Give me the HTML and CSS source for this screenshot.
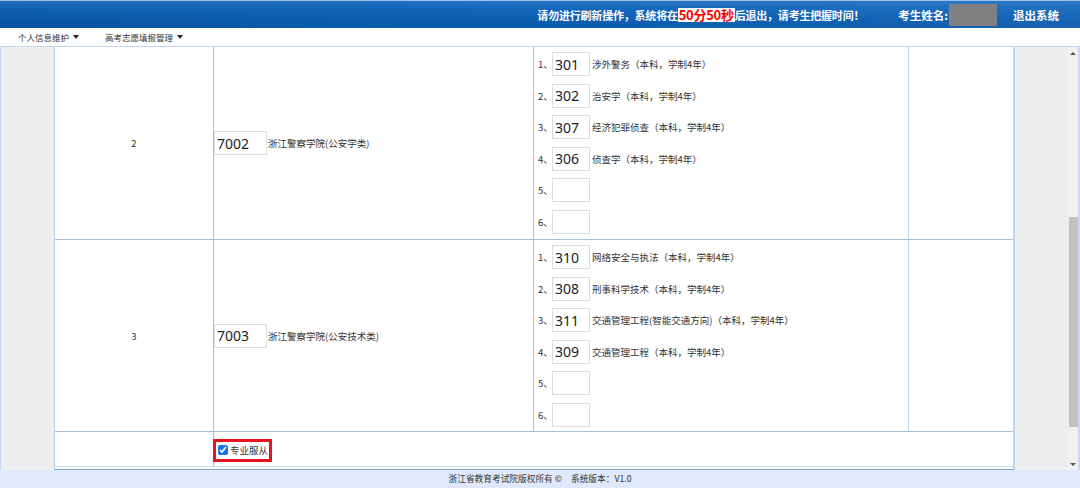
FILE: index.html
```html
<!DOCTYPE html>
<html lang="zh-CN">
<head>
<meta charset="utf-8">
<title>高考志愿填报</title>
<link rel="stylesheet" href="styles.css">
</head>
<body>
<div class="header">
  <div class="notice">请勿进行刷新操作，系统将在<span class="timer">50分50秒</span>后退出，请考生把握时间！</div>
  <div class="student">考生姓名:<span class="name-mask"></span></div>
  <a class="logout">退出系统</a>
</div>
<div class="menu">
  <span class="menu-item">个人信息维护<i class="caret"></i></span>
  <span class="menu-item">高考志愿填报管理<i class="caret"></i></span>
</div>
<div class="main">
  <div class="side-left"></div>
  <div class="content">
    <div class="row row-tall">
      <div class="cell c-no">2</div>
      <div class="cell c-school"><input class="code-lg" value="7002"><span class="sname">浙江警察学院(公安学类)</span></div>
      <div class="cell c-major">
        <div class="pick"><span class="idx">1、</span><input class="code-sm" value="301"><span class="pname">涉外警务（本科，学制4年）</span></div>
        <div class="pick"><span class="idx">2、</span><input class="code-sm" value="302"><span class="pname">治安学（本科，学制4年）</span></div>
        <div class="pick"><span class="idx">3、</span><input class="code-sm" value="307"><span class="pname">经济犯罪侦查（本科，学制4年）</span></div>
        <div class="pick"><span class="idx">4、</span><input class="code-sm" value="306"><span class="pname">侦查学（本科，学制4年）</span></div>
        <div class="pick"><span class="idx">5、</span><input class="code-sm" value=""></div>
        <div class="pick"><span class="idx">6、</span><input class="code-sm" value=""></div>
      </div>
      <div class="cell c-extra"></div>
    </div>
    <div class="row row-tall row-second">
      <div class="cell c-no">3</div>
      <div class="cell c-school"><input class="code-lg" value="7003"><span class="sname">浙江警察学院(公安技术类)</span></div>
      <div class="cell c-major">
        <div class="pick"><span class="idx">1、</span><input class="code-sm" value="310"><span class="pname">网络安全与执法（本科，学制4年）</span></div>
        <div class="pick"><span class="idx">2、</span><input class="code-sm" value="308"><span class="pname">刑事科学技术（本科，学制4年）</span></div>
        <div class="pick"><span class="idx">3、</span><input class="code-sm" value="311"><span class="pname">交通管理工程(智能交通方向)（本科，学制4年）</span></div>
        <div class="pick"><span class="idx">4、</span><input class="code-sm" value="309"><span class="pname">交通管理工程（本科，学制4年）</span></div>
        <div class="pick"><span class="idx">5、</span><input class="code-sm" value=""></div>
        <div class="pick"><span class="idx">6、</span><input class="code-sm" value=""></div>
      </div>
      <div class="cell c-extra"></div>
    </div>
    <div class="row row-short">
      <div class="cell c-no"></div>
      <div class="cell c-obey"><label class="obey"><input type="checkbox" checked>专业服从</label></div>
    </div>
    <div class="content-gap"></div>
  </div>
  <div class="side-right">
    <div class="scrollbar">
      <div class="sb-arrow"><i class="tri-up"></i></div>
      <div class="sb-pre"></div>
      <div class="sb-thumb"></div>
      <div class="sb-post"></div>
      <div class="sb-arrow"><i class="tri-down"></i></div>
    </div>
  </div>
</div>
<div class="footer">浙江省教育考试院版权所有 ©<span class="sep"></span>系统版本：V1.0</div>
</body>
</html>
```

FILE: styles.css
```css
* { box-sizing: border-box; }
html, body { margin: 0; padding: 0; }
body {
  width: 1080px;
  height: 488px;
  overflow: hidden;
  font-family: "Noto Sans CJK SC", "Noto Sans", sans-serif;
  color: #333;
  background: #fff;
}

/* header */
.header {
  height: 28px;
  display: flex;
  align-items: center;
  justify-content: flex-end;
  padding-right: 21px;
  border-top: 1px solid #9fc0e6;
  background:
    linear-gradient(100deg, rgba(0,0,0,0.06) 0%, rgba(0,0,0,0) 40%, rgba(255,255,255,0.05) 100%),
    linear-gradient(to bottom, #2373c5 0%, #1265ba 30%, #0b5cb0 70%, #0a5aad 100%);
  color: #fff;
  font-weight: bold;
  font-size: 11.5px;
}
.notice { font-size: 11px; letter-spacing: -0.2px; white-space: nowrap; }
.timer {
  background: #fff;
  color: #f00;
  font-size: 13px;
  letter-spacing: -0.3px;
  padding: 0 1px;
  line-height: 14px;
  display: inline-block;
}
.student { margin-left: 34px; display: flex; align-items: center; }
.name-mask {
  display: inline-block;
  width: 48px;
  height: 22px;
  background: #808080;
  margin-left: 1px;
}
.logout { margin-left: 16px; color: #fff; }

/* menu */
.menu {
  height: 19px;
  display: flex;
  align-items: center;
  padding-left: 18px;
  border-bottom: 1px solid #c3d6ee;
  font-size: 8.5px;
  color: #333;
}
.menu-item { display: flex; align-items: center; margin-right: 26px; }
.caret {
  display: inline-block;
  width: 0; height: 0;
  border-left: 3px solid transparent;
  border-right: 3px solid transparent;
  border-top: 4px solid #222;
  margin-left: 4px;
}

/* main */
.main {
  height: 423px;
  display: flex;
  border-left: 1px solid #c3d6ee;
}
.side-left { width: 53px; background: #eeeeee; }
.content {
  width: 961px;
  background: #fff;
  border-left: 1px solid #b6cde9;
  border-right: 2px solid #c0d4ec;
  border-bottom: 1px solid #76a5dc;
  display: flex;
  flex-direction: column;
}
.row {
  display: grid;
  grid-template-columns: 159px 320px 374px 1fr;
  border-bottom: 1px solid #a9c0da;
}
.row-tall { height: 193px; }
.row-second { height: 192px; }
.row-short { height: 35px; grid-template-columns: 159px 1fr; border-bottom-color: #c8d7ea; }
.content-gap { height: 2px; }
.cell { border-right: 1px solid #a9c0da; font-size: 9.5px; }
.c-extra { border-right: none; border-left: 1px solid #c0d4ec; }
.c-no { display: flex; align-items: center; justify-content: center; }
.c-school { display: flex; align-items: center; }
.c-major {
  display: flex;
  flex-direction: column;
  gap: 7.6px;
  padding: 5px 0 0 4px;
  border-right: none;
}
.c-obey { border-right: none; display: flex; align-items: center; }

input.code-lg, input.code-sm {
  height: 24px;
  border: 1px solid #dcdcdc;
  font-family: "Noto Sans", "Open Sans", sans-serif;
  font-size: 14px;
  color: #222;
  padding: 0 0 0 2px;
  margin: 0;
  background: #fff;
  outline: none;
}
input.code-lg { width: 53px; }
input.code-sm { width: 38px; }
.sname { margin-left: 1px; color: #333; }
.pick { display: flex; align-items: center; height: 24px; }
.idx { width: 14px; color: #333; }
.pname { margin-left: 2px; color: #333; }

.obey {
  display: flex;
  align-items: center;
  height: 23px;
  margin-left: -1px;
  margin-top: 2px;
  padding: 0 1px 0 2px;
  border: 3px solid #e5141e;
  font-size: 9.5px;
  color: #333;
}
.obey input {
  width: 10px;
  height: 10px;
  margin: 0 2px 0 0;
  accent-color: #1a73e8;
}

/* fake scrollbar */
.side-right {
  flex: 1;
  background: #eeeeee;
  display: flex;
  justify-content: flex-end;
  border-right: 2px solid #c9d9ee;
}
.scrollbar {
  width: 10px;
  display: flex;
  flex-direction: column;
  background: #f1f1f1;
}
.sb-arrow { height: 12px; display: flex; align-items: center; justify-content: center; }
.tri-up, .tri-down {
  width: 0; height: 0;
  border-left: 3px solid transparent;
  border-right: 3px solid transparent;
}
.tri-up { border-bottom: 3px solid #555; }
.tri-down { border-top: 3px solid #555; }
.sb-pre { height: 158px; }
.sb-thumb { height: 210px; background: #c1c1c1; margin-left: 1px; }
.sb-post { flex: 1; }

/* footer */
.footer {
  height: 18px;
  line-height: 18px;
  background: #dfe9fb;
  text-align: center;
  font-size: 8.7px;
  color: #333;
}
.sep { display: inline-block; width: 9px; }
```
